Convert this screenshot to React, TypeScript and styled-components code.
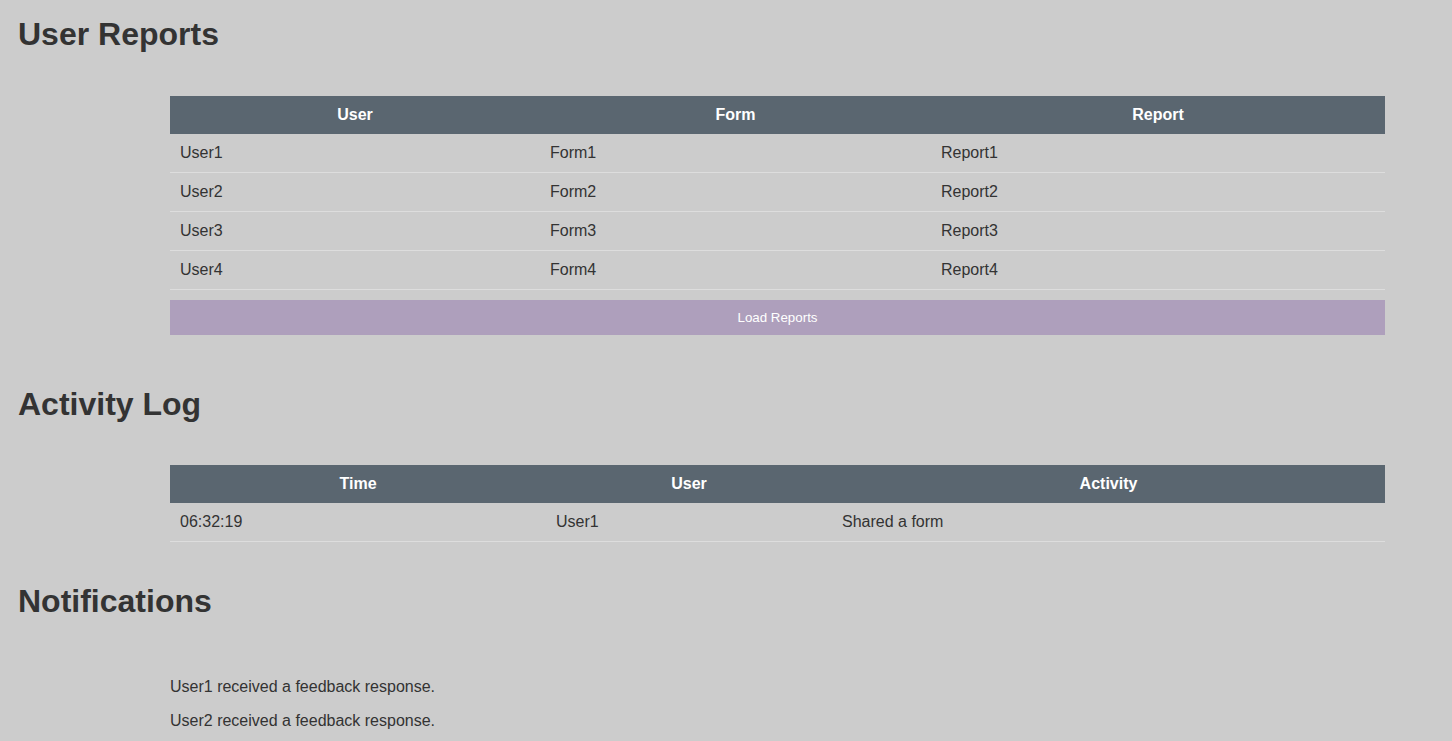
import React from 'react';
import styled, { createGlobalStyle } from 'styled-components';

const GlobalStyle = createGlobalStyle`
    html, body {
        margin: 0;
        padding: 0;
        background: #cccccc;
    }
    body {
        font-family: "Liberation Sans", Arial, sans-serif;
        color: #333333;
    }
`;

const Page = styled.div`
    padding: 16px 16px 16px 18px;
`;

const Section = styled.section`
    & + & {
        margin-top: 41px;
    }
`;

const Heading = styled.h2`
    margin: 0 0 27px;
    font-size: 32px;
    line-height: 37px;
    font-weight: bold;
    color: #333333;
`;

const Content = styled.div<{ $top: number }>`
    margin-left: 152px;
    width: 1215px;
    padding-top: ${p => p.$top}px;
`;

const Table = styled.table`
    width: 100%;
    border-collapse: collapse;
    table-layout: fixed;
    font-size: 16px;
`;

const Col = styled.col<{ $width: number }>`
    width: ${p => p.$width}px;
`;

const HeadCell = styled.th`
    background: #5a6670;
    color: #ffffff;
    font-weight: bold;
    text-align: center;
    padding: 10px;
    line-height: 18px;
`;

const Row = styled.tr`
    border-bottom: 1px solid #dddddd;
`;

const Cell = styled.td`
    padding: 10px;
    line-height: 18px;
    text-align: left;
    color: #333333;
`;

const LoadButton = styled.button`
    display: block;
    width: 100%;
    margin: 10px 0 0;
    padding: 10px;
    border: none;
    background: #ae9fbc;
    color: #ffffff;
    font-family: "Liberation Sans", Arial, sans-serif;
    font-size: 13.33px;
    line-height: 15px;
    cursor: pointer;
`;

const ButtonRow = styled.div`
    padding-bottom: 10px;
`;

const NoticeList = styled.div`
    display: flex;
    flex-direction: column;
`;

const Notice = styled.div`
    padding: 8px 0;
    font-size: 16px;
    line-height: 18px;
    color: #333333;
`;

interface Column {
    title: string;
    width: number;
}

const reportColumns: Column[] = [
    { title: 'User', width: 370 },
    { title: 'Form', width: 391 },
    { title: 'Report', width: 454 },
];

const reports = [1, 2, 3, 4].map(n => [`User${n}`, `Form${n}`, `Report${n}`]);

const activityColumns: Column[] = [
    { title: 'Time', width: 376 },
    { title: 'User', width: 286 },
    { title: 'Activity', width: 553 },
];

const activity = [['06:32:19', 'User1', 'Shared a form']];

const notices = [
    'User1 received a feedback response.',
    'User2 received a feedback response.',
];

const DataTable = ({ columns, rows }: { columns: Column[]; rows: string[][] }) => (
    <Table>
        <colgroup>
            {columns.map(c => <Col key={c.title} $width={c.width} />)}
        </colgroup>
        <thead>
            <tr>
                {columns.map(c => <HeadCell key={c.title}>{c.title}</HeadCell>)}
            </tr>
        </thead>
        <tbody>
            {rows.map((r, i) => (
                <Row key={i}>
                    {r.map((v, j) => <Cell key={j}>{v}</Cell>)}
                </Row>
            ))}
        </tbody>
    </Table>
);

const App = () => {
    return (
        <>
            <GlobalStyle />
            <Page>
                <Section>
                    <Heading>User Reports</Heading>
                    <Content $top={16}>
                        <DataTable columns={reportColumns} rows={reports} />
                        <ButtonRow>
                            <LoadButton>Load Reports</LoadButton>
                        </ButtonRow>
                    </Content>
                </Section>
                <Section>
                    <Heading>Activity Log</Heading>
                    <Content $top={15}>
                        <DataTable columns={activityColumns} rows={activity} />
                    </Content>
                </Section>
                <Section>
                    <Heading>Notifications</Heading>
                    <Content $top={23}>
                        <NoticeList>
                            {notices.map(n => <Notice key={n}>{n}</Notice>)}
                        </NoticeList>
                    </Content>
                </Section>
            </Page>
        </>
    );
};

export default App;
